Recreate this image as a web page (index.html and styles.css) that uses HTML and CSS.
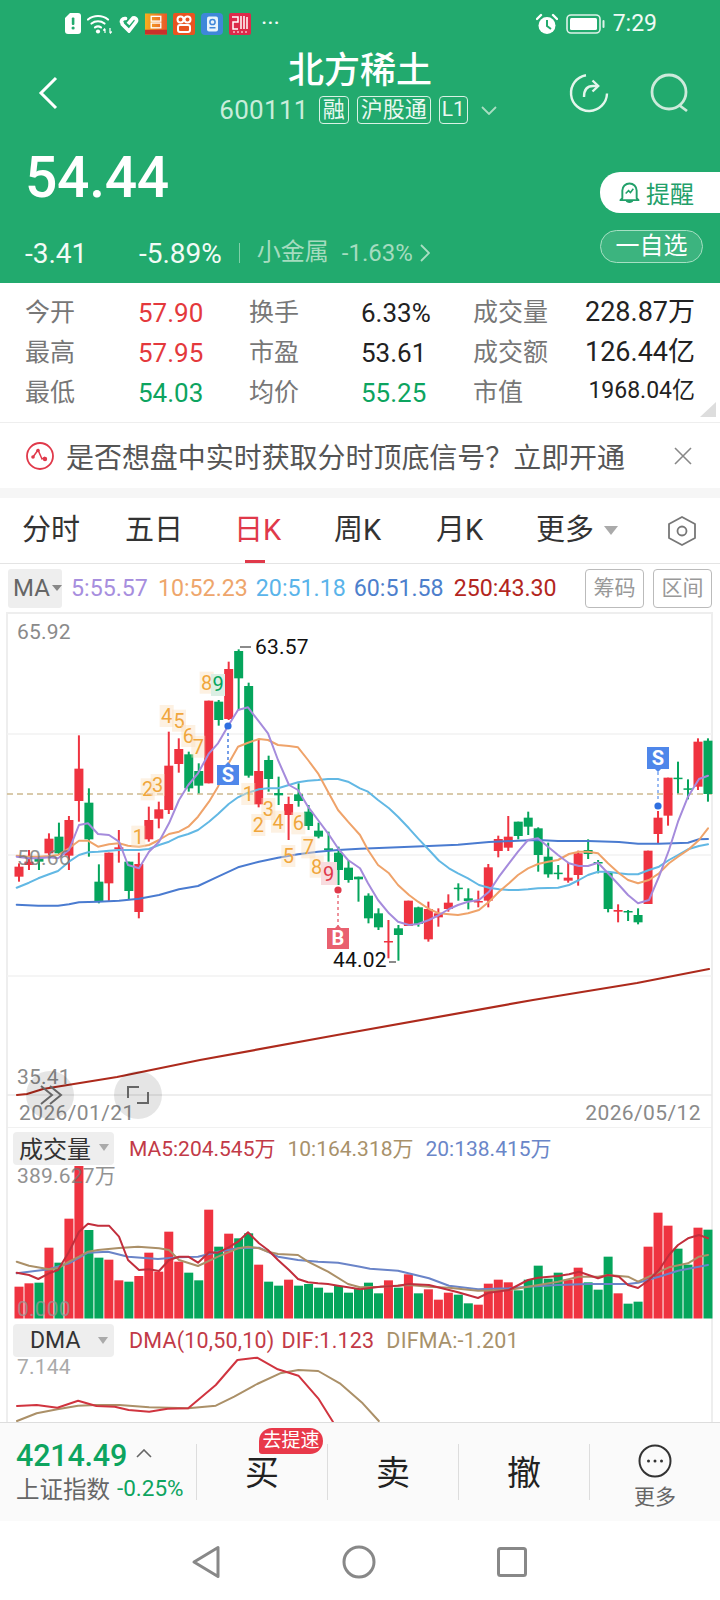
FILE: index.html
```html
<!DOCTYPE html>
<html lang="zh-CN">
<head>
<meta charset="utf-8">
<title>北方稀土</title>
<link rel="stylesheet" href="styles.css">
</head>
<body>
<div class="page">
  <header class="header">
    <div class="status">
      <div class="status-left">
        <svg class="st-sim" viewBox="0 0 16 21"><path d="M5 0h8a3 3 0 0 1 3 3v15a3 3 0 0 1-3 3H3a3 3 0 0 1-3-3V5z" fill="#fff"/><rect x="6.8" y="4.5" width="2.6" height="7.5" rx="1" fill="#22aa6e"/><circle cx="8.1" cy="15" r="1.6" fill="#22aa6e"/></svg>
        <svg class="st-wifi" viewBox="0 0 26 21"><g fill="none" stroke="#fff" stroke-width="2.2" stroke-linecap="round"><path d="M1 6.500a16 16 0 0 1 20 0"/><path d="M4.500 10.500a10.500 10.500 0 0 1 13 0"/><path d="M8 14.300a5.500 5.500 0 0 1 6 0"/></g><circle cx="11" cy="18.500" r="2.100" fill="#fff"/><path d="M18 20v-4m-1.700 1.500L18 15.500M23 15v5m1.700-1.500L23 20.500" stroke="#fff" stroke-width="1.200" fill="none"/></svg>
        <svg class="st-heart" viewBox="0 0 20 18"><g fill="none" stroke="#fff" stroke-width="3.600"><path d="M2.500 8.500l7.500 7.500 7-9c1.500-2-.5-5-3-4l-5 6"/><path d="M3 8c-1.500-2 .5-5 3.500-4.500" stroke-linecap="round"/></g></svg>
        <svg class="st-app" viewBox="0 0 23 22"><defs><linearGradient id="ag" x1="0" y1="0" x2="1" y2="0"><stop offset="0" stop-color="#f6b01e"/><stop offset="1" stop-color="#e8582a"/></linearGradient></defs><rect width="23" height="22" fill="url(#ag)"/><rect y="17" width="23" height="5" fill="#c9302c"/><rect x="6.500" y="3" width="10" height="5" fill="none" stroke="#fff" stroke-width="1.400"/><rect x="6.500" y="10" width="10" height="5" fill="none" stroke="#fff" stroke-width="1.400"/></svg>
        <svg class="st-app" viewBox="0 0 22 22"><rect width="22" height="22" rx="2" fill="#e95320"/><g fill="none" stroke="#fff" stroke-width="2"><circle cx="7.500" cy="6.500" r="3"/><circle cx="14.500" cy="6.500" r="3"/><rect x="5" y="12" width="12" height="7" rx="2"/></g></svg>
        <svg class="st-app" viewBox="0 0 22 22"><rect width="22" height="22" rx="4" fill="#3f87d9"/><rect x="6" y="3.500" width="11" height="15" rx="2" fill="#e8f3fb"/><circle cx="11.500" cy="9" r="2.600" fill="none" stroke="#3f87d9" stroke-width="1.500"/><rect x="8.500" y="14" width="6" height="1.500" fill="#3f87d9"/></svg>
        <svg class="st-app" viewBox="0 0 22 22"><rect width="22" height="22" rx="2" fill="#dc2a4a"/><g fill="none" stroke="#fff" stroke-width="1.500"><path d="M3 4h6v5H4v7h5"/><path d="M12 3v13M15 3v13M18 4v12"/></g><path d="M4 19h14" stroke="#fff" stroke-width="1" stroke-dasharray="2 2"/></svg>
        <span class="st-dots">···</span>
      </div>
      <div class="status-right">
        <svg class="st-alarm" viewBox="0 0 22 22"><circle cx="11" cy="12.500" r="8.500" fill="#fff"/><path d="M11 7v6l4 3" stroke="#22aa6e" stroke-width="2" fill="none"/><path d="M1 6l4-4M21 6l-4-4" stroke="#fff" stroke-width="2.400" stroke-linecap="round"/></svg>
        <svg class="st-batt" viewBox="0 0 40 20"><rect x="1" y="1" width="33" height="18" rx="4" fill="none" stroke="#fff" stroke-width="1.600" opacity=".85"/><rect x="4" y="4" width="27" height="12" rx="1.500" fill="#fff"/><rect x="36.500" y="6" width="2" height="8" rx="1" fill="#fff" opacity=".85"/></svg>
        <span class="st-time">7:29</span>
      </div>
    </div>
    <div class="nav">
      <div class="nav-left">
        <svg class="ic-back" viewBox="0 0 20 34"><path d="M18 2L3 17l15 15" fill="none" stroke="#fff" stroke-width="3"/></svg>
      </div>
      <div class="nav-title">
        <h1 class="title">北方稀土</h1>
        <div class="code-row">
          <span class="code">600111</span>
          <span class="tag tag-1">融</span>
          <span class="tag tag-3">沪股通</span>
          <span class="tag tag-l">L1</span>
          <svg class="ic-down" viewBox="0 0 16 9"><path d="M1 1l7 7 7-7" fill="none" stroke="#a9dec2" stroke-width="1.800"/></svg>
        </div>
      </div>
      <div class="nav-right">
        <svg class="ic-refresh" viewBox="0 0 40 40"><g fill="none" stroke="#e4f6ec" stroke-width="2.400"><path d="M17 2.200A18 18 0 1 0 38 20.500"/><path d="M15 24c0-7 3-11 9-11h5"/><path d="M23.500 7.500l5.700 5.500-5.700 5.500"/></g></svg>
        <svg class="ic-search" viewBox="0 0 40 40"><g fill="none" stroke="#cdeadb" stroke-width="2.800"><circle cx="19" cy="19" r="17"/><path d="M29 32l8 6"/></g></svg>
      </div>
    </div>
    <div class="quote">
      <div class="quote-left">
        <div class="price">54.44</div>
        <div class="changes">
          <span class="chg chg-a">-3.41</span>
          <span class="chg">-5.89%</span>
          <span class="vbar"></span>
          <span class="sector">小金属</span>
          <span class="sector-pct">-1.63%</span>
          <svg class="ic-right" viewBox="0 0 10 18"><path d="M1 1l8 8-8 8" fill="none" stroke="#a9dec2" stroke-width="1.800"/></svg>
        </div>
      </div>
      <div class="quote-right">
        <div class="remind">
          <svg class="ic-bell" viewBox="0 0 22 24"><path d="M3.500 18V10a7.500 7.500 0 0 1 15 0v8l2 2H1.500zM8 20.500c.5 2 5.500 2 6 0" fill="none" stroke="#22a06a" stroke-width="2" stroke-linejoin="round"/><path d="M7 13l3-3 2 2 3-4" fill="none" stroke="#22a06a" stroke-width="1.600"/></svg>
          <span>提醒</span>
        </div>
        <div class="watch">一自选</div>
      </div>
    </div>
  </header>

  <section class="stats">
    <span class="lb">今开</span><span class="val red">57.90</span><span class="lb">换手</span><span class="val">6.33%</span><span class="lb">成交量</span><span class="val end">228.87万</span>
    <span class="lb">最高</span><span class="val red">57.95</span><span class="lb">市盈</span><span class="val">53.61</span><span class="lb">成交额</span><span class="val end">126.44亿</span>
    <span class="lb">最低</span><span class="val green">54.03</span><span class="lb">均价</span><span class="val green">55.25</span><span class="lb">市值</span><span class="val end small">1968.04亿</span>
    <i class="corner"></i>
  </section>

  <section class="banner">
    <svg class="ic-signal" viewBox="0 0 28 28"><circle cx="14" cy="14" r="13" fill="none" stroke="#e0394a" stroke-width="1.800"/><path d="M7 15l5-7 4 9 3-2" fill="none" stroke="#e0394a" stroke-width="1.500"/><circle cx="7" cy="15" r="1.800" fill="#e0394a"/><circle cx="12" cy="8.500" r="1.800" fill="#e0394a"/><circle cx="19" cy="17" r="2.200" fill="#e0394a"/></svg>
    <span class="banner-text">是否想盘中实时获取分时顶底信号？立即开通</span>
    <svg class="ic-close" viewBox="0 0 18 18"><path d="M1 1l16 16M17 1L1 17" stroke="#888" stroke-width="1.600"/></svg>
  </section>

  <nav class="tabs">
    <div class="tab-grid">
      <span class="tab">分时</span>
      <span class="tab">五日</span>
      <span class="tab active">日K</span>
      <span class="tab">周K</span>
      <span class="tab">月K</span>
      <span class="tab tab-more">更多<i class="caret caret-lg"></i></span>
    </div>
    <svg class="ic-hex" viewBox="0 0 28 30"><path d="M14 1l13 7v14l-13 7-13-7V8z" fill="none" stroke="#777" stroke-width="1.800" stroke-linejoin="round"/><circle cx="14" cy="15" r="4.500" fill="none" stroke="#777" stroke-width="1.800"/></svg>
  </nav>

  <div class="legend">
    <span class="ma-pill">MA<i class="caret caret-sm"></i></span>
    <span class="ma c5">5:55.57</span>
    <span class="ma c10">10:52.23</span>
    <span class="ma c20">20:51.18</span>
    <span class="ma c60">60:51.58</span>
    <span class="ma c250">250:43.30</span>
    <span class="legend-btns"><span class="lbtn">筹码</span><span class="lbtn">区间</span></span>
  </div>

  <main class="charts">
    <section class="panel panel-k">
      <svg class="plot" viewBox="0 612 720 516">
        <g id="kGrid"></g>
        <g id="kCandles"></g>
        <g id="kLines"></g>
        <g id="kMarks"></g>
        <text class="ax" x="17" y="639">65.92</text>
        <text class="ax ax-fade" x="17" y="865">50.66</text>
        <text class="ax" x="17" y="1084">35.41</text>
        <text class="ax date" x="19" y="1120">2026/01/21</text>
        <text class="ax date" x="701" y="1120" text-anchor="end">2026/05/12</text>
        <text class="peak" x="255" y="654">63.57</text>
        <text class="peak" x="333" y="967">44.02</text>
        <path class="tick" d="M240 647h11M389 962h7"/>
        <circle class="fab" cx="50" cy="1095" r="24"/>
        <circle class="fab" cx="138" cy="1095" r="24"/>
        <path class="fab-ic" d="M41 1086l11 9-11 9M50 1086l11 9-11 9"/>
        <path class="fab-ic" d="M128 1098v-11h11M148 1092v11h-11"/>
      </svg>
    </section>

    <section class="panel panel-v">
      <svg class="plot" viewBox="0 1128 720 192">
        <g id="vGrid"></g>
        <g id="vBars"></g>
        <g id="vLines"></g>
        <text class="ax ax-fade" x="17" y="1183">389.627万</text>
        <text class="ax ax-fade2" x="17" y="1316">0.000</text>
      </svg>
      <div class="panel-head">
        <span class="pill">成交量<i class="caret caret-md"></i></span>
        <span class="pl p-red">MA5:204.545万</span>
        <span class="pl p-tan">10:164.318万</span>
        <span class="pl p-blue">20:138.415万</span>
      </div>
    </section>

    <section class="panel panel-d">
      <svg class="plot" viewBox="0 1320 720 102">
        <g id="dGrid"></g>
        <g id="dLines"></g>
        <text class="ax ax-light" x="17" y="1374">7.144</text>
      </svg>
      <div class="panel-head">
        <span class="pill">DMA<i class="caret caret-md"></i></span>
        <span class="pl p-red">DMA(10,50,10)</span>
        <span class="pl p-red">DIF:1.123</span>
        <span class="pl p-tan">DIFMA:-1.201</span>
      </div>
    </section>
  </main>

  <section class="bottom">
    <div class="index">
      <div class="index-top"><span class="index-val">4214.49</span><svg class="ic-up" viewBox="0 0 16 9"><path d="M1 8l7-7 7 7" fill="none" stroke="#666" stroke-width="1.600"/></svg></div>
      <div class="index-bot"><span class="index-name">上证指数</span><span class="index-pct">-0.25%</span></div>
    </div>
    <div class="act">买<span class="badge">去提速</span></div>
    <div class="act">卖</div>
    <div class="act">撤</div>
    <div class="act act-more">
      <svg class="ic-more" viewBox="0 0 34 34"><circle cx="17" cy="17" r="15.500" fill="none" stroke="#333" stroke-width="2"/><circle cx="10.500" cy="17" r="1.500" fill="#333"/><circle cx="17" cy="17" r="1.500" fill="#333"/><circle cx="23.500" cy="17" r="1.500" fill="#333"/></svg>
      <span class="more-text">更多</span>
    </div>
  </section>

  <footer class="sysnav">
    <svg class="nav-tri" viewBox="0 0 30 34"><path d="M27 2.500V31.500L3 17z" fill="none" stroke="#888" stroke-width="3" stroke-linejoin="round"/></svg>
    <svg class="nav-cir" viewBox="0 0 34 34"><circle cx="17" cy="17" r="15" fill="none" stroke="#888" stroke-width="3"/></svg>
    <svg class="nav-sq" viewBox="0 0 30 30"><rect x="1.500" y="1.500" width="27" height="27" rx="2" fill="none" stroke="#888" stroke-width="3"/></svg>
  </footer>
</div>
<script src="chart.js"></script>
</body>
</html>
```

FILE: styles.css
```css
* { box-sizing: border-box; }
html, body { margin: 0; padding: 0; background: #fff; }
body { font-family: Roboto, "Noto Sans CJK SC", sans-serif; color: #222; }
i { font-style: normal; }
.page { width: 720px; height: 1600px; overflow: hidden; display: flex; flex-direction: column; }

/* header */
.header { background: #22aa6e; height: 283px; color: #fff; flex: none; }
.status { height: 46px; display: flex; justify-content: space-between; padding: 13px 63px 0 65px; }
.status-left, .status-right { display: flex; align-items: flex-start; }
.status-left { gap: 6px; }
.st-sim { width: 16px; height: 21px; }
.st-wifi { width: 26px; height: 21px; }
.st-heart { width: 20px; height: 18px; margin-top: 2px; }
.st-app { width: 22px; height: 22px; }
.st-dots { font-size: 24px; line-height: 20px; margin-left: 4px; opacity: .95; }
.st-alarm { width: 22px; height: 22px; }
.st-batt { width: 40px; height: 20px; margin: 1px 7px 0 8px; }
.st-time { font-size: 23px; line-height: 22px; color: #f0faf5; }

.nav { height: 86px; display: grid; grid-template-columns: 1fr auto 1fr; }
.nav-left { padding: 30px 0 0 38px; }
.ic-back { width: 20px; height: 34px; display: block; }
.nav-title { padding-top: 5px; text-align: center; }
.title { margin: 0; font-size: 36px; line-height: 40px; font-weight: 500; }
.code-row { display: flex; align-items: center; height: 30px; margin-top: 4px; margin-left: -4px; }
.code { font-size: 26px; letter-spacing: .3px; color: #c9eddb; margin-right: 10px; }
.tag { height: 28px; border: 1px solid #d9f2e5; border-radius: 4px; font-size: 22px; line-height: 25px; text-align: center; color: #e9f8f0; }
.tag-1 { width: 30px; }
.tag-3 { width: 74px; margin-left: 8px; }
.tag-l { width: 29px; margin-left: 8px; font-size: 21px; }
.ic-down { width: 16px; height: 9px; margin-left: 13px; }
.nav-right { display: flex; justify-content: flex-end; gap: 41px; padding: 27px 30px 0 0; }
.ic-refresh, .ic-search { width: 40px; height: 40px; }

.quote { display: flex; justify-content: space-between; }
.quote-left { padding: 16px 0 0 25px; }
.price { font-size: 57px; line-height: 60px; font-weight: 500; letter-spacing: -.3px; }
.changes { display: flex; align-items: center; height: 40px; margin: 25px 0 0 0; }
.chg { font-size: 28px; color: #f2fbf6; }
.chg-a { width: 114px; }
.vbar { width: 1px; height: 20px; background: #7fd0a8; margin: 0 17px; }
.sector { font-size: 24px; line-height: 36px; margin-top: -3px; color: #a5dcbf; }
.sector-pct { font-size: 24px; color: #a5dcbf; margin-left: 13px; }
.ic-right { width: 10px; height: 18px; margin-left: 7px; }
.quote-right { padding-top: 40px; }
.remind { width: 120px; height: 41px; background: #fff; border-radius: 20px 0 0 20px; display: flex; align-items: center; padding-left: 19px; color: #22a06a; font-size: 24px; }
.ic-bell { width: 21px; height: 23px; margin-right: 6px; }
.watch { width: 103px; height: 33px; margin: 17px 17px 0 0; border: 1px solid #a6e0c3; border-radius: 17px; background: rgba(255,255,255,.12); font-size: 24px; line-height: 30px; text-align: center; }

/* stats */
.stats { position: relative; flex: none; height: 140px; padding: 10px 0 0 25px; border-bottom: 1px solid #eee; display: grid; grid-template-columns: 113px 111px 112px 112px 112px 110px; grid-auto-rows: 40px; align-items: center; }
.lb { font-size: 25px; line-height: 36px; margin-top: 0; color: #777; }
.val { font-size: 26px; line-height: 30px; color: #222; }
.val.red { color: #e4393c; }
.val.green { color: #0da45f; }
.val.end { text-align: right; font-size: 27px; margin-top: -3px; }
.val.end.small { font-size: 23px; margin-top: -4px; }
.corner { position: absolute; right: 4px; bottom: 5px; width: 16px; height: 15px; background: #ddd; clip-path: polygon(100% 0, 100% 100%, 0 100%); }

/* banner */
.banner { flex: none; height: 75px; display: flex; align-items: center; padding: 0 28px 0 26px; border-bottom: 10px solid #f6f6f6; }
.ic-signal { width: 28px; height: 28px; }
.banner-text { margin-left: 12px; font-size: 28px; color: #555; white-space: nowrap; flex: 1; letter-spacing: -.05px; }
.ic-close { width: 18px; height: 18px; }

/* tabs */
.tabs { flex: none; height: 66px; display: flex; align-items: center; padding: 0 24px 0 22px; border-bottom: 1px solid #e4e4e4; }
.tab-grid { display: grid; grid-template-columns: 103px 109px 100px 102px 100px auto; align-items: center; flex: 1; height: 100%; }
.tab { position: relative; font-size: 29px; line-height: 65px; color: #333; white-space: nowrap; }
.tab.active { color: #e0394a; }
.tab.active::after { content: ""; position: absolute; left: 11px; bottom: 0; width: 20px; height: 3px; background: #e0394a; }
.tab-more { display: flex; align-items: center; }
.caret { display: inline-block; width: 0; height: 0; border-style: solid; border-color: #aaa transparent transparent; border-bottom-width: 0; }
.caret-lg { border-width: 9px 7px 0; margin-left: 10px; }
.caret-md { border-width: 7px 5px 0; border-bottom-width: 0; }
.caret-sm { border-width: 6px 5px 0; border-color: #888 transparent transparent; margin-left: 2px; }
.ic-hex { width: 28px; height: 30px; }

/* legend */
.legend { flex: none; height: 48px; display: flex; align-items: center; padding: 0 8px; gap: 8px; font-size: 23.2px; white-space: nowrap; }
.ma-pill { width: 54px; height: 39px; background: #eee; border-radius: 3px; display: flex; align-items: center; padding-left: 5px; color: #666; margin-right: 1px; font-size: 24px; }
.c5 { color: #a78ede; }
.c10 { color: #eea66c; margin-left: 2px; }
.c20 { color: #5ab4ea; }
.c60 { color: #4d7fcc; }
.c250 { color: #b3261e; margin-left: 2px; }
.legend-btns { margin-left: auto; display: flex; gap: 9px; }
.lbtn { width: 59px; height: 39px; border: 1px solid #bbb; border-radius: 4px; font-size: 21px; line-height: 36px; text-align: center; color: #999; }

/* charts */
.charts { flex: none; height: 810px; display: flex; flex-direction: column; }
.panel { position: relative; flex: none; overflow: hidden; }
.panel-k { height: 516px; }
.panel-v { height: 192px; }
.panel-d { height: 102px; }
.plot { position: absolute; left: 0; top: 0; width: 720px; height: 100%; display: block; }
.panel-head { position: relative; display: flex; align-items: center; gap: 12px; height: 33px; margin-top: 4px; padding-left: 13px; font-size: 21px; white-space: nowrap; }
.pill { width: 101px; height: 33px; background: #eee; border-radius: 4px; display: flex; align-items: center; padding-left: 6px; font-size: 24px; color: #333; margin-right: 3px; }
.pill .caret { margin-left: 8px; }
.panel-v .pill { padding-bottom: 3px; }
.panel-v .pl { margin-top: -3px; }
.panel-d .pill { padding-left: 17px; font-size: 23px; }
.panel-d .pill .caret { margin-left: 18px; }
.panel-d .pl { font-size: 21.5px; letter-spacing: .2px; }
.panel-d .pl:nth-child(3) { margin-left: -5px; }
.p-red { color: #c23a47; }
.p-tan { color: #a8916a; }
.p-blue { color: #6a86c8; }
.ax { font-size: 21px; fill: #8a8a8a; letter-spacing: .2px; }
.date { letter-spacing: .4px; }
.ax-fade { fill: #777; opacity: .8; }
.ax-fade2 { fill: #999; opacity: .75; }
.ax-light { fill: #aaa; }
.peak { font-size: 21px; fill: #111; letter-spacing: .2px; }
.tick { stroke: #666; stroke-width: 1.5; fill: none; }
.fab { fill: rgba(0,0,0,.1); }
.fab-ic { fill: none; stroke: #666; stroke-width: 2; }
.mark { font-size: 20px; text-anchor: middle; }
.sign { font-size: 20px; font-weight: 700; text-anchor: middle; fill: #fff; }

/* bottom bar */
.bottom { flex: none; height: 99px; background: #fafafa; border-top: 1px solid #ddd; display: flex; align-items: center; }
.index { width: 196px; padding-left: 16px; }
.index-top { display: flex; align-items: center; height: 32px; }
.index-val { font-size: 30.5px; font-weight: 500; color: #0da45f; letter-spacing: -.2px; }
.ic-up { width: 16px; height: 9px; margin: -4px 0 0 9px; }
.index-bot { display: flex; align-items: center; height: 34px; margin-top: -1px; }
.index-name { font-size: 23.5px; color: #666; }
.index-pct { font-size: 22.5px; color: #0da45f; margin-left: 7px; }
.act { position: relative; width: 131px; height: 56px; border-left: 1px solid #ddd; display: flex; align-items: center; justify-content: center; padding-bottom: 3px; font-size: 34px; color: #222; }
.badge { position: absolute; left: 62px; top: -16px; width: 64px; height: 26px; background: #e8394a; border-radius: 13px 13px 13px 3px; font-size: 19px; line-height: 25px; text-align: center; color: #fff; }
.act-more { flex-direction: column; justify-content: flex-start; padding-bottom: 0; }
.ic-more { width: 34px; height: 34px; margin-top: 0; flex: none; }
.more-text { font-size: 21px; line-height: 30px; color: #666; margin-top: 4px; flex: none; }

/* system nav */
.sysnav { flex: 1; background: #fff; display: flex; justify-content: center; align-items: center; gap: 121px; padding: 2px 2px 0 0; }
.nav-tri { width: 30px; height: 34px; }
.nav-cir { width: 34px; height: 34px; }
.nav-sq { width: 30px; height: 30px; }
```

FILE: chart.js
```js
// candle data: [wickTop, bodyTop, bodyBottom, wickBottom, colour]; values in zoomed px
const H1 = [
[760,770,800,815,'r'],[720,755,765,780,'r'],[740,745,755,780,'g'],[670,686,730,735,'r'],[638,680,730,735,'g'],
[618,630,737,780,'r'],[376,476,573,635,'r'],[535,578,688,740,'g'],[763,815,875,880,'g'],[728,728,820,875,'r'],
[660,712,718,758,'r'],[755,755,843,868,'g'],[728,762,906,925,'r'],[590,630,688,695,'r'],[575,598,626,655,'r'],
[365,467,600,612,'r'],[385,417,462,488,'r'],[425,433,535,545,'g'],[460,483,527,550,'g'],[272,272,520,520,'r'],
[270,275,330,347,'g'],[155,177,327,330,'r'],[118,123,205,300,'g'],[218,228,497,503,'g'],[388,483,583,592,'r'],
[437,450,507,545,'g'],[500,549,556,585,'g'],[560,582,615,690,'r'],[520,553,573,590,'g'],[585,605,648,660,'g'],
[638,662,680,685,'g'],[665,715,720,755,'g'],[710,728,780,825,'g'],[750,773,810,818,'g'],[800,800,808,875,'g']];
const H2 = [
[550,557,625,640,'g'],[595,610,652,660,'g'],[630,693,697,745,'r'],[645,655,675,752,'g'],[572,572,648,648,'r'],
[590,592,642,650,'g'],[575,597,688,695,'r'],[595,610,622,650,'r'],[553,578,597,605,'r'],[520,533,537,572,'g'],
[535,565,573,598,'g'],[542,573,577,592,'r'],[462,472,572,592,'r'],[377,387,423,442,'r'],[318,380,413,423,'r'],
[335,335,378,388,'g'],[305,323,350,375,'g'],[352,355,435,485,'g'],[398,440,493,503,'g'],[465,488,492,508,'g'],
[458,503,512,518,'r'],[422,430,495,527,'r'],[388,420,432,447,'g'],[450,456,460,490,'g'],[483,487,597,607,'g'],
[583,600,605,637,'r'],[600,603,607,633,'g'],[595,615,637,643,'g'],[422,422,582,582,'r'],[303,323,372,400,'r'],
[203,203,317,347,'r'],[155,203,207,250,'g'],[208,235,239,268,'g'],[85,95,230,240,'r'],[85,92,252,275,'g']];

const RED = '#ef3340', GREEN = '#05a55c';
const cx = i => 19 + i * 9.985;
const $ = id => document.getElementById(id);

let html = '';
const candle = (d, i, off) => {
  const c = d[4] === 'r' ? RED : GREEN, x = cx(i);
  const t = off + d[0] / 3, b1 = off + d[1] / 3, b2 = off + d[2] / 3, b = off + d[3] / 3;
  html += `<rect x="${x - 1}" y="${t}" width="2" height="${b - t}" fill="${c}"/>`;
  html += `<rect x="${x - 4.5}" y="${b1}" width="9" height="${Math.max(b2 - b1, 1.5)}" fill="${c}"/>`;
};
H1.forEach((d, i) => candle(d, i, 610));
H2.forEach((d, i) => candle(d, i + 35, 710));
$('kCandles').innerHTML = html;

// two-part polylines: left half from one crop, right half from another
const pts = (a, ox, oy, sx = 3, sy = 3) => a.map(p => `${(ox + p[0] / sx).toFixed(1)},${(oy + p[1] / sy).toFixed(1)}`).join(' ');
const line = (p, color, w = 2) => `<polyline points="${p}" fill="none" stroke="${color}" stroke-width="${w}" stroke-linejoin="round" stroke-linecap="round"/>`;

const lines = [
 ['#4a7bd0',
  [[50,884],[115,887],[174,887],[207,883],[237,877],[294,875],[357,872],[417,866],[477,855],[537,838],[594,828],[654,800],[714,772],[777,755],[834,743],[894,733],[954,725],[1014,720],[1080,716]],
  [[114,412],[207,408],[294,404],[387,396],[474,392],[534,390],[594,393],[684,393],[777,396],[834,401],[897,401],[984,398],[1017,388],[1044,387]]],
 ['#62b8e4',
  [[50,833],[87,818],[115,805],[147,793],[174,783],[207,755],[237,735],[264,727],[294,725],[327,722],[357,720],[417,720],[447,717],[477,705],[507,695],[537,680],[565,672],[594,660],[627,635],[654,612],[686,582],[714,562],[744,548],[777,538],[804,535],[834,535],[867,525],[894,517],[924,512],[954,510],[984,507],[1014,507],[1044,515],[1080,535]],
  [[24,245],[54,270],[87,295],[114,320],[147,355],[174,385],[207,420],[237,452],[267,475],[294,490],[324,505],[357,525],[387,533],[417,538],[447,540],[474,540],[504,538],[534,535],[564,534],[594,533],[627,525],[657,510],[684,495],[714,485],[744,485],[777,490],[804,493],[834,493],[867,480],[897,470],[927,450],[954,435],[984,418],[1017,408],[1044,403]]],
 ['#efa36a',
  [[50,737],[87,740],[115,740],[147,738],[174,735],[207,715],[237,692],[264,692],[294,710],[327,703],[357,700],[384,707],[417,710],[447,705],[477,690],[507,672],[537,665],[565,650],[594,620],[627,575],[654,530],[686,460],[714,410],[744,398],[777,387],[804,390],[834,405],[867,408],[894,412],[924,450],[954,490],[984,545],[1014,600],[1044,635],[1080,675]],
  [[24,420],[54,465],[87,490],[114,525],[147,555],[174,575],[207,597],[237,610],[267,613],[294,615],[324,610],[357,600],[387,575],[417,545],[447,520],[474,495],[504,475],[534,462],[564,455],[594,450],[627,432],[657,425],[684,425],[714,430],[744,460],[777,490],[804,510],[834,520],[867,510],[897,490],[927,460],[954,440],[984,420],[1017,390],[1044,355]]],
 ['#a58bdc',
  [[50,740],[87,745],[115,745],[147,742],[174,745],[207,720],[237,645],[264,640],[294,672],[327,675],[357,695],[384,765],[417,775],[447,725],[477,695],[507,640],[537,570],[565,525],[594,490],[627,430],[654,400],[686,345],[714,300],[744,292],[777,335],[804,370],[834,450],[867,525],[894,540],[924,590],[954,630],[984,670],[1014,715],[1044,750],[1080,775]],
  [[24,520],[54,570],[87,610],[114,635],[147,645],[174,642],[207,630],[237,615],[267,597],[294,585],[324,575],[357,570],[387,545],[417,500],[447,460],[474,425],[504,390],[534,385],[564,410],[594,435],[627,460],[657,468],[684,468],[714,458],[744,490],[777,525],[804,555],[834,580],[867,570],[897,500],[927,420],[954,335],[984,260],[1017,207],[1044,197]]]
];
$('kLines').innerHTML = lines.map(l => line(pts(l[1], 0, 610) + ' ' + pts(l[2], 360, 710), l[0])).join('')
  + line('17,1095 27,1094 43,1089 117,1077 200,1060 337,1035 533,1000 637,983 709,969', '#ad2a1c', 2.2);

// grid and frames
const v = (x, a, b) => `<path d="M${x} ${a}V${b}" stroke="#eee" stroke-width="2"/>`;
const h = (y, c = '#f2f2f2', w = 1.5) => `<path d="M7 ${y}H712" stroke="${c}" stroke-width="${w}"/>`;
$('kGrid').innerHTML = v(7, 612, 1128) + v(712, 612, 1128) + h(613, '#eee', 2) + h(734) + h(855) + h(976) + h(1095, '#e8e8e8') + h(1128, '#ececec')
  + `<path d="M7 794H712" stroke="#cdb98f" stroke-width="1.5" stroke-dasharray="6 4"/>`;
$('vGrid').innerHTML = v(7, 1128, 1320) + v(712, 1128, 1320);
$('dGrid').innerHTML = v(7, 1320, 1422) + v(712, 1320, 1422);

// markers: TD digits and S / B signals
const O = '#f0a63c', OB = 'rgba(250,225,190,.45)';
const seq = [
 [415,680,'1'],[443,538,'2'],[473,525,'3'],[500,318,'4'],[537,332,'5'],[565,378,'6'],[595,410,'7'],[620,218,'8'],
 [745,552,'1'],[775,645,'2'],[805,597,'3'],[834,635,'4'],[865,738,'5'],[895,640,'6'],[925,712,'7'],[950,770,'8']];
let m = seq.map(s => {
  const x = s[0] / 3, y = 610 + s[1] / 3;
  return `<rect x="${x - 7}" y="${y - 11}" width="14" height="22" fill="${OB}"/><text class="mark" x="${x}" y="${y + 7}" fill="${O}">${s[2]}</text>`;
}).join('');
m += `<rect x="211" y="674" width="14" height="22" fill="#dcefe4"/><text class="mark" x="218" y="691" fill="#05a55c">9</text>`;
m += `<rect x="321" y="862" width="16" height="23" fill="#f8dcdf"/><text class="mark" x="328.5" y="881" fill="#e0394a">9</text>`;
m += `<path d="M228 733V760" stroke="#4a7fe0" stroke-width="1.5" stroke-dasharray="3 3"/><circle cx="228" cy="726" r="3.6" fill="#2f6fe0"/>
  <path d="M217 765H225L228 762L231 765H239V785H217Z" fill="#4f87ea"/><text class="sign" x="228" y="782">S</text>`;
m += `<path d="M338 895V926" stroke="#e8707e" stroke-width="1.5" stroke-dasharray="3 3"/><circle cx="338" cy="890" r="3.6" fill="#e0394a"/>
  <path d="M327 928H335L338 925L341 928H349V949H327Z" fill="#e9606f"/><text class="sign" x="338" y="945">B</text>`;
m += `<path d="M658 772V802" stroke="#7aa5ef" stroke-width="1.5" stroke-dasharray="3 3"/><circle cx="658" cy="806" r="3.6" fill="#2f6fe0"/>
  <path d="M647 747H669V769H661L658 772L655 769H647Z" fill="#4f87ea"/><text class="sign" x="658" y="765">S</text>`;
$('kMarks').innerHTML = m;

// volume bars: [top, colour]
const V1 = [[680,'r'],[670,'r'],[668,'g'],[563,'r'],[608,'g'],[476,'r'],[318,'r'],[510,'g'],[593,'g'],[599,'r'],[661,'r'],[665,'g'],[648,'r'],[578,'r'],[635,'r'],[515,'r'],[605,'r'],[638,'g'],[661,'g'],[449,'r'],[560,'g'],[521,'r'],[535,'g'],[520,'g'],[614,'r'],[665,'g'],[677,'g'],[659,'r'],[677,'g'],[672,'g'],[683,'g'],[698,'g'],[678,'g'],[698,'g'],[686,'g']];
const V2 = [[668,'g'],[700,'g'],[661,'r'],[683,'g'],[643,'r'],[700,'g'],[688,'r'],[719,'r'],[698,'r'],[704,'g'],[730,'g'],[734,'r'],[671,'r'],[659,'r'],[667,'r'],[691,'g'],[659,'g'],[617,'g'],[656,'g'],[638,'g'],[659,'r'],[623,'r'],[667,'g'],[689,'g'],[590,'g'],[700,'r'],[731,'g'],[725,'g'],[560,'r'],[458,'r'],[497,'r'],[566,'g'],[614,'g'],[503,'r'],[509,'g']];
$('vBars').innerHTML = V1.concat(V2).map((d, i) => {
  const y = 1060 + d[0] / 3;
  return `<rect x="${cx(i) - 4.5}" y="${y}" width="9" height="${1318.5 - y}" fill="${d[1] === 'r' ? RED : GREEN}"/>`;
}).join('');

const VL = [
 ['#6a84c8',
  [[50,640],[147,628],[207,610],[264,578],[324,575],[384,590],[474,597],[537,592],[594,590],[654,575],[714,565],[777,563],[834,590],[894,600],[954,605],[1014,608],[1080,620]],
  [[30,626],[114,632],[207,655],[267,677],[354,688],[447,685],[504,680],[594,675],[684,672],[804,672],[834,668],[897,650],[954,632],[1044,615]]],
 ['#ab9068',
  [[50,605],[87,617],[147,628],[174,625],[207,605],[237,590],[264,575],[294,570],[357,564],[414,560],[477,565],[507,570],[537,600],[594,618],[654,590],[714,565],[744,560],[777,565],[804,575],[834,582],[894,585],[924,605],[984,635],[1044,672],[1080,682]],
  [[60,680],[147,675],[207,680],[267,683],[354,692],[447,690],[504,680],[594,665],[657,650],[714,650],[744,645],[804,650],[834,665],[867,650],[927,622],[984,610],[1017,590],[1044,585]]],
 ['#c22e3c',
  [[50,638],[87,645],[115,657],[147,640],[174,630],[207,575],[237,515],[264,491],[294,497],[327,497],[357,530],[384,600],[417,630],[447,628],[477,633],[507,600],[537,590],[565,590],[594,608],[627,577],[654,578],[686,562],[714,545],[744,517],[777,550],[804,570],[834,600],[867,630],[894,657],[924,667],[954,670],[984,672],[1014,677],[1044,682],[1080,688]],
  [[60,680],[114,677],[147,672],[207,675],[267,690],[294,697],[354,714],[387,698],[447,690],[504,660],[534,653],[594,648],[627,643],[657,635],[714,655],[744,645],[777,650],[804,675],[834,684],[867,660],[897,630],[927,585],[954,555],[984,535],[1017,525],[1044,535]]]
];
$('vLines').innerHTML = VL.map(l => line(pts(l[1], 0, 1060) + ' ' + pts(l[2], 360, 1060), l[0])).join('');

// DMA: crop scaled 2.178 across, 3 down
const dr = [[37,258],[80,255],[125,263],[170,242],[210,258],[250,260],[280,270],[325,275],[365,266],[410,265],[470,195],[517,120],[560,113],[605,148],[650,167],[693,235],[725,305]];
const dt = [[37,303],[80,280],[125,268],[170,257],[210,255],[260,255],[325,262],[410,265],[470,257],[510,230],[560,192],[610,160],[650,150],[693,153],[740,190],[790,250],[825,303]];
$('dLines').innerHTML = line(pts(dt, 0, 1320, 2.178, 3), '#ab9068') + line(pts(dr, 0, 1320, 2.178, 3), '#d0343f');
```
